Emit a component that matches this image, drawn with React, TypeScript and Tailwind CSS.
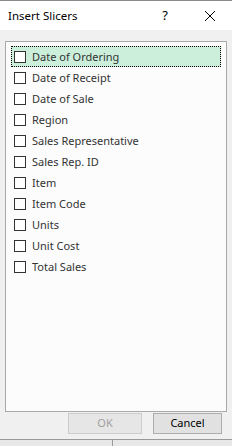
import React from 'react';

const fields = [
  'Date of Ordering',
  'Date of Receipt',
  'Date of Sale',
  'Region',
  'Sales Representative',
  'Sales Rep. ID',
  'Item',
  'Item Code',
  'Units',
  'Unit Cost',
  'Total Sales',
];

export default function App() {
  return (
    <div className="w-[232px] h-[446px] flex flex-col bg-[#f0f0f0] overflow-hidden" style={{ fontFamily: '"Noto Sans", "Open Sans", sans-serif' }}>
      <div className="h-px bg-[#8a8a8a]" />
      <div className="h-[29px] bg-white flex items-center pl-2 text-[11.5px] text-black">
        <span className="flex-1">Insert Slicers</span>
        <span className="w-[10px] text-center text-[13px] mr-[34px]">?</span>
        <svg width="12" height="12" viewBox="0 0 12 12" className="mr-[16px]">
          <path d="M1 1 L11 11 M11 1 L1 11" stroke="#000" strokeWidth="1" />
        </svg>
      </div>
      <div className="flex-1 flex flex-col px-[5px] pt-[11px]">
        <div className="h-[371px] border border-[#a9a9a9] bg-[#fcfcfc] pt-[4px] pl-[5px] pr-[5px]">
          {fields.map((f, i) => (
            <div
              key={f}
              className={`h-[21px] flex items-center gap-[6px] pl-[2px] ${i === 0 ? 'bg-[#ccefdc] border border-dotted border-black' : 'border border-transparent'}`}
            >
              <div className="w-[12px] h-[12px] border border-[#333] bg-white" />
              <span className="text-[11px] text-[#333] leading-none">{f}</span>
            </div>
          ))}
        </div>
        <div className="flex justify-end gap-[11px] mt-[1px] pr-[5px]">
          <button className="w-[74px] h-[21px] border border-[#cccccc] bg-[#e6e6e6] text-[11px] text-[#a0a0a0]">OK</button>
          <button className="w-[69px] h-[21px] border border-[#adadad] bg-[#e1e1e1] text-[11px] text-black">Cancel</button>
        </div>
      </div>
      <div className="h-[7px] border-t border-[#9a9a9a] bg-[#e8e8e8] flex">
        <div className="w-[113px] border-r border-[#9a9a9a]" />
      </div>
    </div>
  );
}
